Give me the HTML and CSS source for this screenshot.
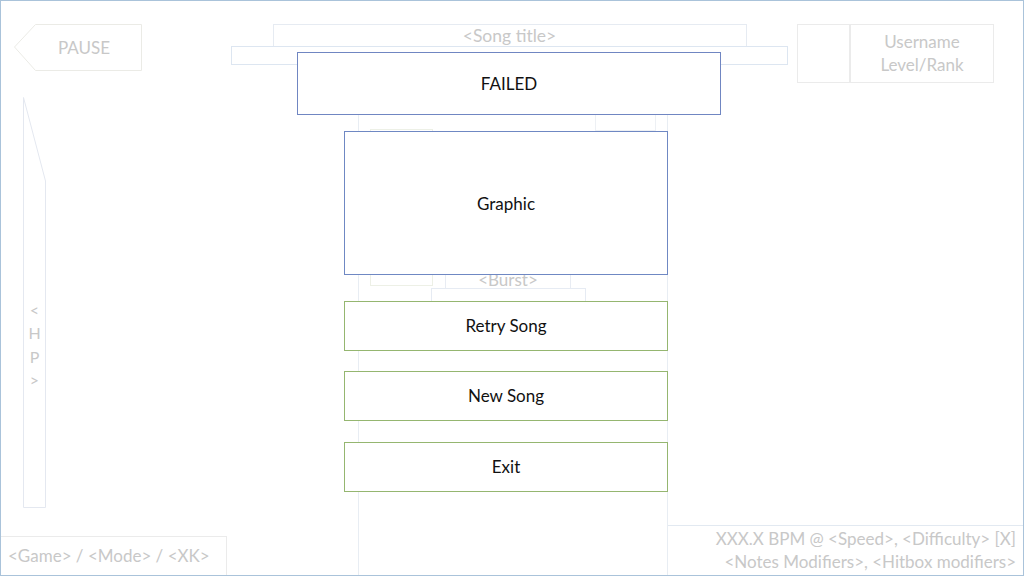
FILE: index.html
```html
<!DOCTYPE html>
<html lang="en">

<head>
    <meta charset="UTF-8">
    <meta name="viewport" content="width=device-width, initial-scale=1.0">
    <title>Failed Screen</title>
    <link rel="stylesheet" href="styles.css">
</head>

<body>
    <div class="screen">
        <!-- faded gameplay HUD behind the dialog -->
        <div class="hud">
            <div class="top-row">
                <div class="pause">
                    <svg class="pause-shape" width="128" height="47" viewBox="0 0 128 47">
                        <polygon points="0.5,23 21.5,0.5 127.5,0.5 127.5,46.5 21.5,46.5" />
                    </svg>
                    <span>PAUSE</span>
                </div>

                <div class="title-block">
                    <div class="song-title">&lt;Song title&gt;</div>
                    <div class="score-bar">&lt;Score&gt; &nbsp; &lt;Accuracy&gt;</div>
                </div>

                <div class="user">
                    <div class="avatar"></div>
                    <div class="user-text">Username<br>Level/Rank</div>
                </div>
            </div>

            <div class="hp">
                <svg class="hp-shape" width="23" height="411" viewBox="0 0 23 411">
                    <polygon points="0.5,0.5 22.5,84 22.5,410.5 0.5,410.5" />
                </svg>
                <span>&lt;</span>
                <span>H</span>
                <span>P</span>
                <span>&gt;</span>
            </div>

            <div class="playfield">
                <div class="judge-box"></div>
                <div class="lane-box"></div>
                <div class="combo-box"></div>
                <div class="burst">&lt;Burst&gt;</div>
                <div class="burst-meter"></div>
                <div class="small-box"></div>
            </div>

            <div class="mode-info">&lt;Game&gt; / &lt;Mode&gt; / &lt;XK&gt;</div>

            <div class="chart-info">
                XXX.X BPM @ &lt;Speed&gt;, &lt;Difficulty&gt; [X]<br>
                &lt;Notes Modifiers&gt;, &lt;Hitbox modifiers&gt;
            </div>
        </div>

        <!-- failed dialog -->
        <div class="overlay">
            <div class="failed">FAILED</div>
            <div class="graphic">Graphic</div>
            <button class="menu-btn retry">Retry Song</button>
            <button class="menu-btn new-song">New Song</button>
            <button class="menu-btn exit">Exit</button>
        </div>
    </div>
</body>

</html>
```

FILE: styles.css
```css
* {
    box-sizing: border-box;
}

body {
    margin: 0;
    font-family: Lato, "Open Sans", sans-serif;
    background: #fff;
}

.screen {
    position: relative;
    width: 1024px;
    height: 576px;
    border: 1px solid #aac3da;
    overflow: hidden;
}

/* ---------- HUD ---------- */

.hud {
    display: grid;
    grid-template-columns: 357px 310px 1fr;
    grid-template-rows: 96px 1fr 50px;
    height: 100%;
    color: #c8c8c8;
    font-size: 17px;
}

.top-row {
    grid-column: 1 / -1;
    display: flex;
    align-items: flex-start;
    padding: 23px 0 0 13px;
}

.pause {
    position: relative;
    width: 128px;
    height: 47px;
    display: flex;
    align-items: center;
    padding-left: 44px;
}

.pause-shape {
    position: absolute;
    top: 0;
    left: 0;
}

.pause-shape polygon {
    fill: none;
    stroke: #ebebe6;
}

.pause span {
    position: relative;
}

.title-block {
    width: 557px;
    margin-left: 89px;
}

.song-title {
    width: 474px;
    height: 23px;
    margin: 0 auto;
    border: 1px solid #e6ebf2;
    text-align: center;
    line-height: 22px;
    font-size: 17.5px;
}

.score-bar {
    height: 19px;
    margin-top: -1px;
    border: 1px solid #dde6f1;
    text-align: center;
    font-size: 16px;
    line-height: 17px;
    padding: 2px 0 0 5px;
}

.user {
    display: flex;
    width: 197px;
    height: 59px;
    margin-left: 9px;
    border: 1px solid #ebebeb;
}

.avatar {
    width: 53px;
    border-right: 2px solid #ebebeb;
}

.user-text {
    flex: 1;
    text-align: center;
    line-height: 23px;
    padding-top: 5px;
}

.hp {
    grid-column: 1;
    grid-row: 2;
    position: relative;
    width: 23px;
    height: 411px;
    margin-left: 22px;
    display: flex;
    flex-direction: column;
    align-items: center;
    padding-top: 201px;
    font-size: 16px;
    line-height: 23.3px;
}

.hp-shape {
    position: absolute;
    top: 0;
    left: 0;
}

.hp-shape polygon {
    fill: none;
    stroke: #e4e8f0;
}

.hp span {
    position: relative;
}

.playfield {
    grid-column: 2;
    grid-row: 2 / 4;
    position: relative;
    border-left: 1px solid #e8edf3;
    border-right: 1px solid #e8edf3;
}

.judge-box {
    position: absolute;
    left: 11px;
    top: 32px;
    width: 63px;
    height: 157px;
    border: 1px solid #edf0e6;
}

.lane-box {
    position: absolute;
    left: 236px;
    top: 10px;
    width: 61px;
    height: 24px;
    border: 1px solid #edf0f4;
}

.combo-box {
    position: absolute;
    left: 86px;
    top: 170px;
    width: 126px;
    height: 22px;
    border: 1px solid #e8ecf3;
}

.burst {
    position: absolute;
    left: 86px;
    top: 174px;
    width: 126px;
    text-align: center;
    line-height: 18px;
}

.burst-meter {
    position: absolute;
    left: 72px;
    top: 191px;
    width: 155px;
    height: 20px;
    border: 1px solid #e6ebf3;
}

.small-box {
    position: absolute;
    left: 86px;
    top: 235px;
    width: 61px;
    height: 19px;
    border: 1px solid #ececec;
}

.mode-info {
    grid-column: 1;
    grid-row: 3;
    align-self: end;
    width: 227px;
    height: 39px;
    margin-left: -1px;
    border-top: 1px solid #ebebeb;
    border-right: 1px solid #ebebeb;
    padding: 8px 0 0 8px;
    white-space: nowrap;
}

.chart-info {
    grid-column: 3;
    grid-row: 3;
    border-top: 1px solid #e2e9f1;
    text-align: right;
    padding: 1px 7px 0 0;
    line-height: 23px;
    white-space: nowrap;
}

/* ---------- dialog ---------- */

.overlay {
    position: absolute;
    top: 0;
    left: 0;
    right: 0;
    bottom: 0;
    display: flex;
    flex-direction: column;
    align-items: flex-start;
    padding-top: 51px;
    color: #111;
    font-size: 17px;
}

.failed {
    width: 424px;
    height: 63px;
    margin-left: 296px;
    background: #fff;
    border: 1px solid #7086c2;
    display: flex;
    align-items: center;
    justify-content: center;
}

.graphic {
    width: 324px;
    height: 144px;
    margin: 16px 0 0 343px;
    background: #fff;
    border: 1px solid #6f88c3;
    display: flex;
    align-items: center;
    justify-content: center;
}

.menu-btn {
    width: 324px;
    height: 50px;
    margin-left: 343px;
    background: #fff;
    border: 1px solid #95b670;
    font-family: inherit;
    font-size: 17px;
    color: #111;
    padding: 0 0 1px;
}

.retry {
    margin-top: 26px;
}

.new-song {
    margin-top: 20px;
}

.exit {
    margin-top: 21px;
}
```
